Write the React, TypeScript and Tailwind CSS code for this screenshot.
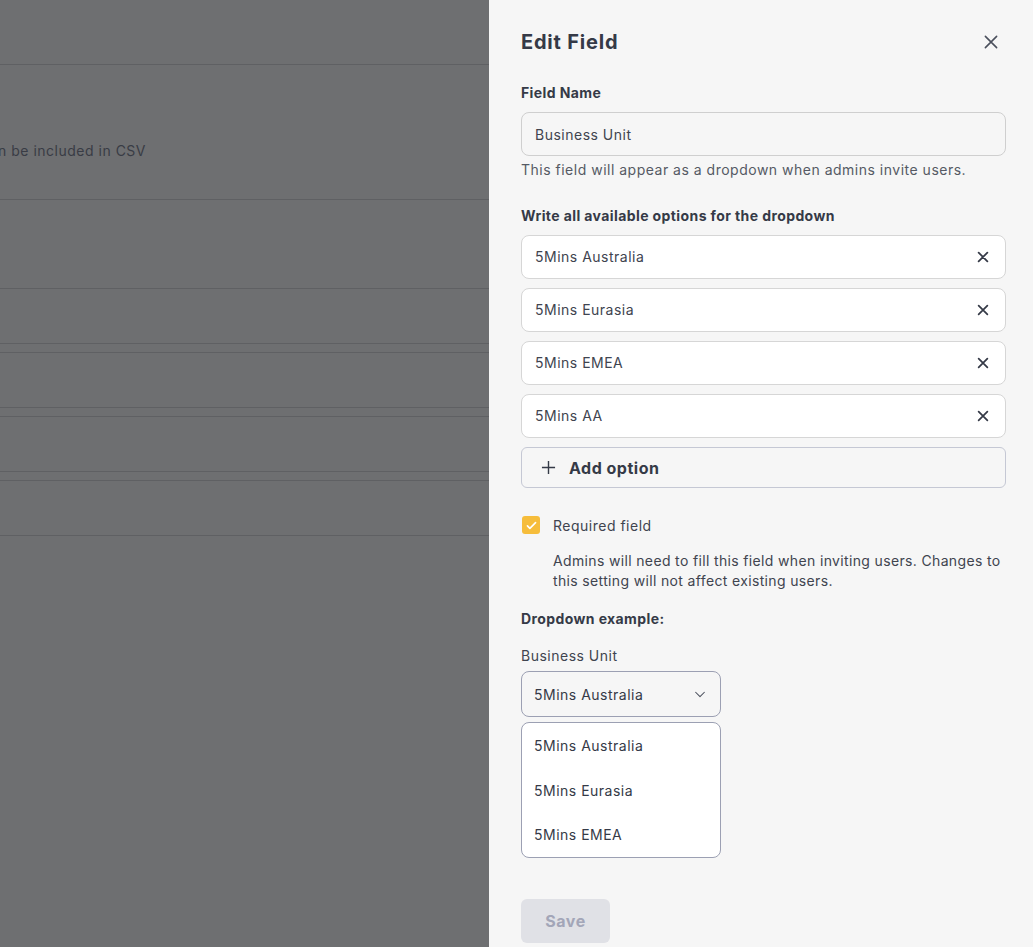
import React from "react";

const font = { fontFamily: "Inter, 'Noto Sans', sans-serif" };

function CloseIcon({ className = "" }: { className?: string }) {
  return (
    <svg viewBox="0 0 16 16" className={className} fill="none" stroke="currentColor" strokeLinecap="round">
      <path d="M3 3l10 10M13 3L3 13" />
    </svg>
  );
}

function Background() {
  return (
    <div className="flex-1 bg-[#6e6f71] overflow-hidden">
      <div className="h-[65px] border-b border-[#5f6063]" />
      <div className="h-[135px] border-b border-[#5f6063] flex items-end pb-[38px]">
        <div className="w-[146px] flex justify-end overflow-hidden">
          <span className="whitespace-nowrap text-[14px] tracking-[0.5px] text-[#393c45]">Additional fields can be included in CSV</span>
        </div>
      </div>
      <div className="h-[89px] border-b border-[#5f6063]" />
      {[0, 1, 2].map((i) => (
        <div key={i} className="h-[64px] border-b border-[#5f6063] flex flex-col">
          <div className="h-[55px] border-b border-[#5f6063]" />
        </div>
      ))}
      <div className="h-[55px] border-b border-[#5f6063]" />
    </div>
  );
}

const options = ["5Mins Australia", "5Mins Eurasia", "5Mins EMEA", "5Mins AA"];

function Panel() {
  return (
    <div className="w-[544px] h-[947px] bg-[#f6f6f6] pl-8 pr-[27px] pt-[28px] text-[#353a47] tracking-[0.5px]">
      <div className="flex items-center justify-between h-[28px]">
        <h1 className="text-[20px] font-bold leading-[28px] tracking-[0.8px] text-[#353a47]">Edit Field</h1>
        <CloseIcon className="w-[18px] h-[18px] mr-[6px] text-[#4a4f5c] [stroke-width:1.4]" />
      </div>

      <div className="mt-[27px] text-[14px] font-bold leading-[20px] tracking-[0.4px]">Field Name</div>
      <div className="mt-[9px] h-[44px] rounded-[8px] border border-[#cfcfcf] bg-[#f6f6f6] flex items-center px-[13px] text-[14px] text-[#40444f]">
        Business Unit
      </div>
      <p className="mt-[4px] text-[14px] leading-[20px] text-[#555a64]">
        This field will appear as a dropdown when admins invite users.
      </p>

      <div className="mt-[26px] text-[14px] font-bold leading-[20px] tracking-[0.4px]">Write all available options for the dropdown</div>
      <div className="mt-[9px] flex flex-col gap-[9px]">
        {options.map((o) => (
          <div
            key={o}
            className="h-[44px] rounded-[8px] border border-[#d6d6d6] bg-white flex items-center justify-between pl-[13px] pr-[15px] text-[14px] text-[#40444f]"
          >
            <span className="-mt-[1px]">{o}</span>
            <CloseIcon className="w-[14px] h-[14px] text-[#353a47] [stroke-width:2]" />
          </div>
        ))}
        <div className="h-[41px] rounded-[6px] border border-[#c5c8d4] bg-[#f6f6f6] flex items-center pl-[19px] gap-[13px]">
          <svg viewBox="0 0 16 16" className="w-[15px] h-[15px] text-[#353a47]" fill="none" stroke="currentColor" strokeWidth="1.5">
            <path d="M8 1v14M1 8h14" />
          </svg>
          <span className="text-[16px] font-bold tracking-[0.5px] text-[#353a47]">Add option</span>
        </div>
      </div>

      <div className="mt-[27px] flex items-center gap-[13px] h-[20px]">
        <div className="w-[18px] h-[18px] rounded-[3px] bg-[#f6bd3b] flex items-center justify-center ml-[1px]">
          <svg viewBox="0 0 16 16" className="w-[13px] h-[13px]" fill="none" stroke="white" strokeWidth="2" strokeLinecap="round" strokeLinejoin="round">
            <path d="M3 8.5l3 3L13 4.5" />
          </svg>
        </div>
        <span className="text-[14px] text-[#40444f]">Required field</span>
      </div>
      <p className="mt-[16px] pl-[32px] text-[14px] leading-[20px] tracking-[0.35px] text-[#40444f]">
        Admins will need to fill this field when inviting users. Changes to this setting will not affect existing users.
      </p>

      <div className="mt-[18px] text-[14px] font-bold leading-[20px] tracking-[0.4px]">Dropdown example:</div>
      <div className="mt-[17px] text-[14px] leading-[20px] text-[#40444f]">Business Unit</div>
      <div className="mt-[5px] w-[200px] h-[46px] rounded-[8px] border border-[#9ca0b3] bg-[#f6f6f6] flex items-center justify-between pl-[12px] pr-[13px] text-[14px] text-[#353a47]">
        <span>5Mins Australia</span>
        <svg viewBox="0 0 16 16" className="w-[14px] h-[14px] text-[#4a4f5c]" fill="none" stroke="currentColor" strokeWidth="1.2" strokeLinecap="round" strokeLinejoin="round">
          <path d="M3 6l5 5 5-5" />
        </svg>
      </div>
      <div className="mt-[5px] w-[200px] h-[136px] rounded-[8px] border border-[#9ca0b3] bg-white flex flex-col text-[14px] text-[#353a47]">
        {options.slice(0, 3).map((o) => (
          <div key={o} className="h-[45px] flex items-center pl-[12px]">
            {o}
          </div>
        ))}
      </div>

      <button className="mt-[41px] w-[89px] h-[44px] rounded-[6px] bg-[#e0e1e6] text-[16px] font-bold tracking-[0.5px] text-[#a3a6b8]">
        Save
      </button>
    </div>
  );
}

export default function App() {
  return (
    <div className="flex w-[1033px] h-[947px] overflow-hidden" style={font}>
      <Background />
      <Panel />
    </div>
  );
}
